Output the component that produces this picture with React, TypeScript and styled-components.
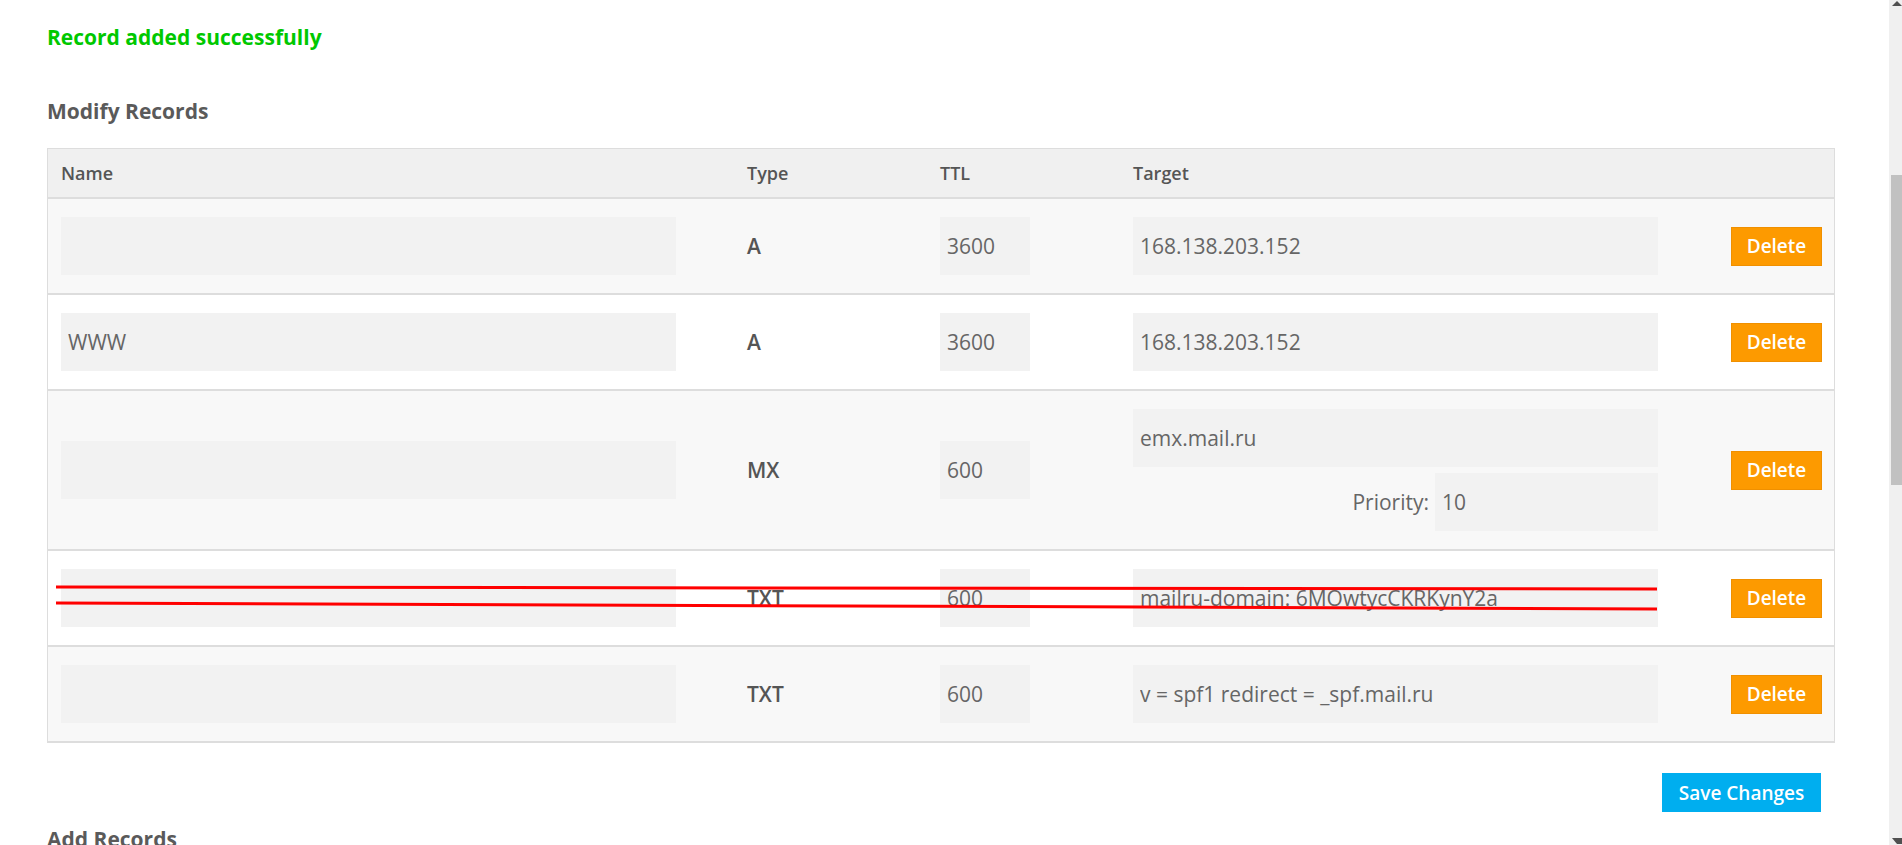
import React from 'react';
import styled, { createGlobalStyle } from 'styled-components';

type DnsRecord = {
  name: string;
  type: string;
  ttl: string;
  target: string;
  priority?: string;
  struck?: boolean;
};

const records: DnsRecord[] = [
  { name: '', type: 'A', ttl: '3600', target: '168.138.203.152' },
  { name: 'WWW', type: 'A', ttl: '3600', target: '168.138.203.152' },
  { name: '', type: 'MX', ttl: '600', target: 'emx.mail.ru', priority: '10' },
  { name: '', type: 'TXT', ttl: '600', target: 'mailru-domain: 6MOwtycCKRKynY2a', struck: true },
  { name: '', type: 'TXT', ttl: '600', target: 'v = spf1 redirect = _spf.mail.ru' },
];

const GlobalStyle = createGlobalStyle`
  html, body {
    margin: 0;
    padding: 0;
    background: #fff;
    overflow: hidden;
  }
  body {
    font-family: "Open Sans", "Liberation Sans", sans-serif;
    color: #555;
  }
`;

const App: React.FC = () => {
  return (
    <Page>
      <GlobalStyle />
      <Main>
        <Notice>Record added successfully</Notice>
        <SectionTitle>Modify Records</SectionTitle>
        <Table>
          <HeaderRow>
            <HeadCell>Name</HeadCell>
            <HeadCell>Type</HeadCell>
            <HeadCell>TTL</HeadCell>
            <HeadCell>Target</HeadCell>
            <HeadCell />
          </HeaderRow>
          {records.map((r, i) => (
            <Row key={i} $alt={i % 2 === 0}>
              <Cell>
                <NameInput defaultValue={r.name} />
              </Cell>
              <Cell>
                <TypeText>{r.type}</TypeText>
              </Cell>
              <Cell>
                <TtlInput defaultValue={r.ttl} />
              </Cell>
              <Cell>
                <TargetStack>
                  <TargetInput defaultValue={r.target} />
                  {r.priority && (
                    <PriorityLine>
                      <PriorityLabel>Priority:</PriorityLabel>
                      <PriorityInput defaultValue={r.priority} />
                    </PriorityLine>
                  )}
                </TargetStack>
              </Cell>
              <ActionCell>
                <DeleteButton>Delete</DeleteButton>
              </ActionCell>
              {r.struck && (
                <StrikeMarks>
                  <line x1="8" y1="36" x2="1609" y2="38" />
                  <line x1="8" y1="52" x2="1609" y2="58" />
                </StrikeMarks>
              )}
            </Row>
          ))}
        </Table>
        <Actions>
          <SaveButton>Save Changes</SaveButton>
        </Actions>
        <SectionTitle $tight>Add Records</SectionTitle>
      </Main>
      <ScrollRail>
        <RailArrow viewBox="0 0 13 8">
          <polygon points="3,6 8,1 13,6" />
        </RailArrow>
        <RailThumb />
        <RailSpacer />
        <RailArrow viewBox="0 0 13 8">
          <polygon points="3,1 13,1 13,7 8,7" />
        </RailArrow>
      </ScrollRail>
    </Page>
  );
};

export default App;

const Page = styled.div`
  display: flex;
  height: 845px;
  overflow: hidden;
`;

const Main = styled.main`
  flex: 1;
  padding: 23px 54px 0 47px;
  min-width: 0;
`;

const Notice = styled.div`
  font-size: 21px;
  line-height: 29px;
  font-weight: 700;
  color: #00c800;
`;

const SectionTitle = styled.h2<{ $tight?: boolean }>`
  margin: ${({ $tight }) => ($tight ? '13px' : '45px')} 0 0;
  font-size: 21px;
  line-height: 29px;
  font-weight: 700;
  color: #5a5a5a;
`;

const Table = styled.div`
  margin-top: 22px;
  border: 1px solid #dddddd;
  border-bottom-width: 2px;
`;

const columns = '686px 193px 193px 1fr 120px';

const HeaderRow = styled.div`
  display: grid;
  grid-template-columns: ${columns};
  height: 48px;
  align-items: center;
  background: #f0f0f0;
`;

const HeadCell = styled.div`
  padding-left: 13px;
  font-size: 18px;
  font-weight: 600;
  color: #555;
`;

const Row = styled.div<{ $alt: boolean }>`
  position: relative;
  display: grid;
  grid-template-columns: ${columns};
  align-items: center;
  padding: 18px 0;
  border-top: 2px solid #dddddd;
  background: ${({ $alt }) => ($alt ? '#f8f8f8' : '#ffffff')};
`;

const Cell = styled.div`
  padding-left: 13px;
`;

const ActionCell = styled.div`
  display: flex;
  justify-content: flex-end;
  padding-right: 12px;
`;

const Field = styled.input`
  display: block;
  box-sizing: border-box;
  height: 58px;
  padding: 0 7px;
  border: none;
  outline: none;
  background: #f2f2f2;
  font-family: "Open Sans", "Liberation Sans", sans-serif;
  font-size: 21px;
  color: #666;
`;

const NameInput = styled(Field)`
  width: 615px;
`;

const TtlInput = styled(Field)`
  width: 90px;
`;

const TargetInput = styled(Field)`
  width: 525px;
`;

const PriorityInput = styled(Field)`
  width: 223px;
`;

const TypeText = styled.span`
  font-size: 21px;
  font-weight: 600;
  color: #555;
`;

const TargetStack = styled.div`
  display: flex;
  flex-direction: column;
  gap: 6px;
  width: 525px;
`;

const PriorityLine = styled.div`
  display: flex;
  align-items: center;
  justify-content: flex-end;
`;

const PriorityLabel = styled.span`
  margin-right: 6px;
  font-size: 21px;
  color: #666;
`;

const DeleteButton = styled.button`
  width: 91px;
  height: 39px;
  padding: 0;
  border: 1px solid #f09000;
  background: #fd9a00;
  color: #fff;
  font-family: "Open Sans", "Liberation Sans", sans-serif;
  font-size: 19px;
  font-weight: 600;
  cursor: pointer;
`;

const StrikeMarks = styled.svg`
  position: absolute;
  inset: 0;
  width: 100%;
  height: 100%;
  pointer-events: none;

  line {
    stroke: #ff0000;
    stroke-width: 3;
  }
`;

const Actions = styled.div`
  display: flex;
  justify-content: flex-end;
  margin-top: 30px;
  padding-right: 14px;
`;

const SaveButton = styled.button`
  width: 159px;
  height: 39px;
  padding: 0;
  border: none;
  background: #00aeef;
  color: #fff;
  font-family: "Open Sans", "Liberation Sans", sans-serif;
  font-size: 19px;
  font-weight: 600;
  cursor: pointer;
`;

const ScrollRail = styled.div`
  display: flex;
  flex-direction: column;
  width: 13px;
  flex-shrink: 0;
  background: #f0f0f0;
`;

const RailArrow = styled.svg`
  width: 13px;
  height: 8px;
  flex-shrink: 0;

  polygon {
    fill: #505050;
  }
`;

const RailThumb = styled.div`
  margin: 167px 0 0 2px;
  height: 310px;
  background: #c1c1c1;
`;

const RailSpacer = styled.div`
  flex: 1;
`;
